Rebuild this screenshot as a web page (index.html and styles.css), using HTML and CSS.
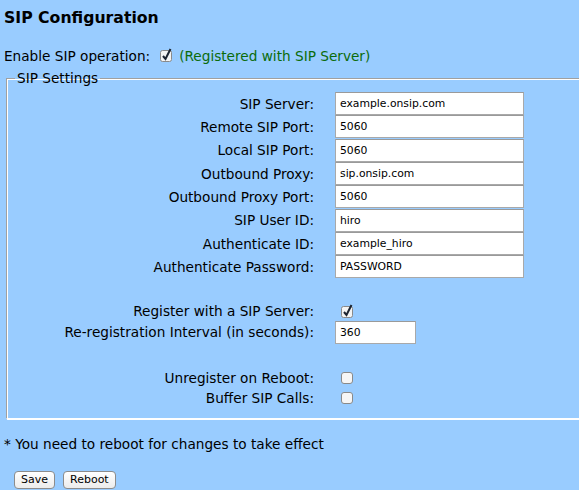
FILE: index.html
```html
<!DOCTYPE html>
<html>
<head>
<meta charset="utf-8">
<title>SIP Configuration</title>
<link rel="stylesheet" href="styles.css">
</head>
<body>
<h1 class="title">SIP Configuration</h1>
<div class="enable-line">
  <span>Enable SIP operation:</span>
  <span class="cb checked"><svg width="14" height="14" viewBox="0 0 14 14"><rect x="1.5" y="2.5" width="11" height="11" rx="2" fill="#f4f4f4" stroke="#8a8a8a"/><path d="M4 8 L6.5 11 L11.5 1" fill="none" stroke="#1c2430" stroke-width="2"/></svg></span>
  <span class="status">(Registered with SIP Server)</span>
</div>
<fieldset class="settings">
  <legend>SIP Settings</legend>
  <div class="form">
    <label class="lbl row-in">SIP Server:</label><div class="val row-in"><input class="txt" type="text" value="example.onsip.com"></div>
    <label class="lbl row-in">Remote SIP Port:</label><div class="val row-in"><input class="txt" type="text" value="5060"></div>
    <label class="lbl row-in">Local SIP Port:</label><div class="val row-in"><input class="txt" type="text" value="5060"></div>
    <label class="lbl row-in">Outbound Proxy:</label><div class="val row-in"><input class="txt" type="text" value="sip.onsip.com"></div>
    <label class="lbl row-in">Outbound Proxy Port:</label><div class="val row-in"><input class="txt" type="text" value="5060"></div>
    <label class="lbl row-in">SIP User ID:</label><div class="val row-in"><input class="txt" type="text" value="hiro"></div>
    <label class="lbl row-in">Authenticate ID:</label><div class="val row-in"><input class="txt" type="text" value="example_hiro"></div>
    <label class="lbl row-in">Authenticate Password:</label><div class="val row-in"><input class="txt" type="text" value="PASSWORD"></div>
    <div class="blank"></div>
    <label class="lbl row-cb">Register with a SIP Server:</label><div class="val row-cb"><span class="cb checked"><svg width="14" height="14" viewBox="0 0 14 14"><rect x="1.5" y="2.5" width="11" height="11" rx="2" fill="#f4f4f4" stroke="#8a8a8a"/><path d="M4 8 L6.5 11 L11.5 1" fill="none" stroke="#1c2430" stroke-width="2"/></svg></span></div>
    <label class="lbl row-in">Re-registration Interval (in seconds):</label><div class="val row-in"><input class="txt short" type="text" value="360"></div>
    <div class="blank tall"></div>
    <label class="lbl row-cb">Unregister on Reboot:</label><div class="val row-cb"><span class="cb"><svg width="14" height="14" viewBox="0 0 14 14"><rect x="1.5" y="1.5" width="11" height="11" rx="2.5" fill="#f6f6f6" stroke="#8a8a8a"/></svg></span></div>
    <label class="lbl row-cb">Buffer SIP Calls:</label><div class="val row-cb"><span class="cb"><svg width="14" height="14" viewBox="0 0 14 14"><rect x="1.5" y="1.5" width="11" height="11" rx="2.5" fill="#f6f6f6" stroke="#8a8a8a"/></svg></span></div>
  </div>
</fieldset>
<p class="note">* You need to reboot for changes to take effect</p>
<div class="buttons">
  <button class="btn" type="button">Save</button>
  <button class="btn" type="button">Reboot</button>
</div>
</body>
</html>
```
FILE: styles.css
```css
html { overflow: hidden; }
body {
  margin: 0;
  padding: 0 4px;
  background: #99ccff;
  font-family: "DejaVu Sans", Verdana, sans-serif;
  font-size: 13.65px;
  color: #000;
}
.title {
  font-size: 15.7px;
  font-weight: bold;
  margin: 0;
  padding-top: 8px;
  height: 36px;
  box-sizing: border-box;
  line-height: 19px;
}
.enable-line {
  display: flex;
  align-items: center;
  height: 20px;
  margin-top: 10px;
}
.enable-line .cb { margin-left: 9px; margin-top: -2px; }
.status { color: #0b6b0b; margin-left: 6px; }
.cb { display: inline-flex; width: 14px; height: 14px; }
.settings {
  margin: 4px 0 0 2px;
  padding: 0 0 10px 0;
  width: 620px;
  border-color: #a0a0a0 #fff #fff #a0a0a0;
  border-style: solid;
  border-width: 1px;
  box-shadow: 1px 1px 0 #fff, inset 1px 1px 0 #fff;
}
.settings legend {
  padding: 0 2px;
  margin-left: 8px;
  line-height: 16px;
}
.form {
  display: grid;
  grid-template-columns: 294px 1fr;
  column-gap: 21px;
  margin-left: 13px;
  padding-top: 6px;
}
.lbl { text-align: right; display: flex; align-items: center; justify-content: flex-end; white-space: nowrap; }
.val { display: flex; align-items: center; }
.row-in { height: 23.33px; }
.row-cb { height: 20px; }
.blank { grid-column: 1 / 3; height: 22px; }
.blank.tall { height: 23.7px; }
.row-cb .cb { margin-left: 5px; }
.txt {
  box-sizing: border-box;
  width: 189px;
  height: 23px;
  border: 1px solid #a9a9a9;
  border-top-color: #9a9a9a;
  background: #fff;
  font-family: "DejaVu Sans", Verdana, sans-serif;
  font-size: 10.8px;
  padding: 0 4px;
  margin: 0;
  color: #000;
}
.txt.short { width: 81px; }
.note { margin: 17px 0 0 0; line-height: 16px; }
.buttons { display: flex; gap: 8px; margin-top: 19px; padding-left: 10px; }
.btn {
  font-family: "DejaVu Sans", Verdana, sans-serif;
  font-size: 11px;
  height: 18px;
  padding: 0 6px;
  border: 1px solid #8c8c8c;
  border-radius: 4px;
  background: linear-gradient(#ffffff, #ececec);
  color: #000;
  line-height: 16px;
}
```
